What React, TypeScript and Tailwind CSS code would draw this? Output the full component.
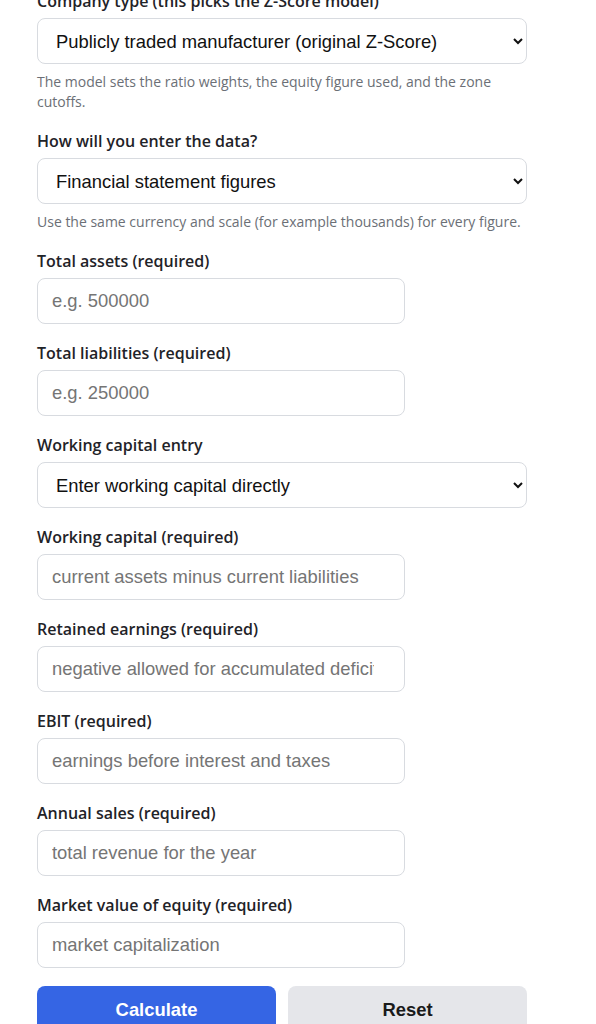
import React from "react";

const labelCls =
  "block text-[16px] leading-[22px] font-semibold text-[#1f2328]";
const controlCls =
  "h-[46px] rounded-lg border border-[#d8dbe0] bg-white pl-[14px] text-[18.4px] text-[#111] placeholder:text-[#757575] outline-none";
const helpCls = "mt-[8px] text-[14px] leading-[20px] text-[#6b6f76]";

const sans = { fontFamily: '"Open Sans", "Noto Sans", sans-serif' };
const arial = { fontFamily: '"Liberation Sans", Arial, sans-serif' };

function SelectField({
  label,
  options,
  help,
}: {
  label: string;
  options: string[];
  help?: string;
}) {
  return (
    <div className="mb-[18px] flex flex-col">
      <label className={labelCls}>{label}</label>
      <select
        className={`${controlCls} pr-[14px] mt-[6px] w-full`}
        style={arial}
        defaultValue={options[0]}
      >
        {options.map((o) => (
          <option key={o}>{o}</option>
        ))}
      </select>
      {help && <p className={helpCls}>{help}</p>}
    </div>
  );
}

function InputField({ label, placeholder }: { label: string; placeholder: string }) {
  return (
    <div className="mb-[18px] flex flex-col">
      <label className={labelCls}>{label}</label>
      <input
        type="text"
        placeholder={placeholder}
        className={`${controlCls} pr-[30px] mt-[6px] w-[368px]`}
        style={arial}
      />
    </div>
  );
}

export default function App() {
  return (
    <div className="min-h-screen bg-white" style={sans}>
      <form className="-mt-[10px] w-[490px] ml-[37px] pb-10">
        <SelectField
          label="Company type (this picks the Z-Score model)"
          options={[
            "Publicly traded manufacturer (original Z-Score)",
            "Private manufacturer (Z'-Score)",
            "Non-manufacturer or emerging market (Z''-Score)",
          ]}
          help="The model sets the ratio weights, the equity figure used, and the zone cutoffs."
        />
        <SelectField
          label="How will you enter the data?"
          options={["Financial statement figures", "Ratios directly"]}
          help="Use the same currency and scale (for example thousands) for every figure."
        />
        <InputField label="Total assets (required)" placeholder="e.g. 500000" />
        <InputField label="Total liabilities (required)" placeholder="e.g. 250000" />
        <SelectField
          label="Working capital entry"
          options={[
            "Enter working capital directly",
            "Enter current assets and current liabilities",
          ]}
        />
        <InputField
          label="Working capital (required)"
          placeholder="current assets minus current liabilities"
        />
        <InputField
          label="Retained earnings (required)"
          placeholder="negative allowed for accumulated deficit"
        />
        <InputField label="EBIT (required)" placeholder="earnings before interest and taxes" />
        <InputField label="Annual sales (required)" placeholder="total revenue for the year" />
        <InputField
          label="Market value of equity (required)"
          placeholder="market capitalization"
        />
        <div className="grid grid-cols-2 gap-3" style={arial}>
          <button
            type="button"
            className="h-[48px] rounded-lg bg-[#3565e4] text-[18.4px] font-bold text-white"
          >
            Calculate
          </button>
          <button
            type="button"
            className="h-[48px] rounded-lg bg-[#e5e6ea] text-[18.4px] font-bold text-[#1a1a1a]"
          >
            Reset
          </button>
        </div>
      </form>
    </div>
  );
}
